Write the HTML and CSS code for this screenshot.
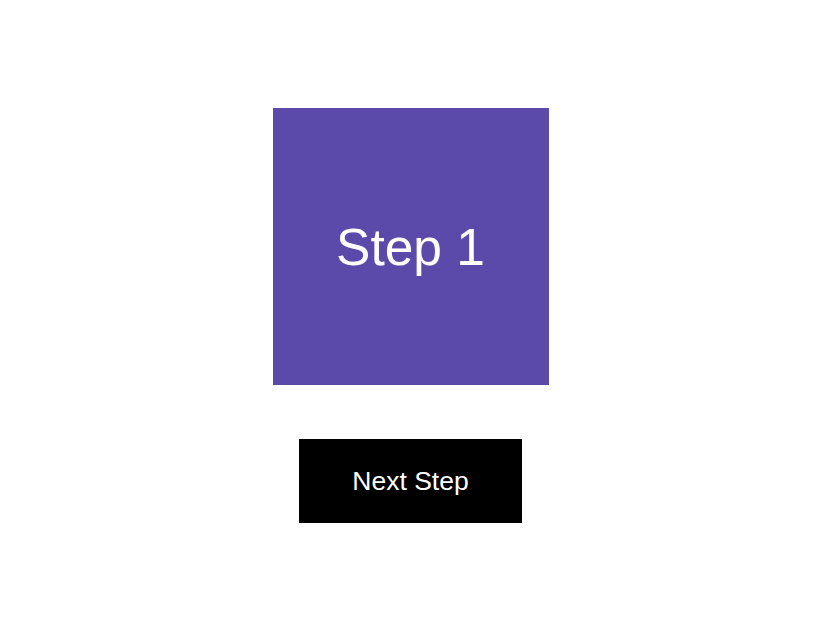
FILE: index.html
```html
<!DOCTYPE html>
<html>
<head>
<meta charset="utf-8">
<link rel="stylesheet" href="styles.css">
</head>
<body>
<div class="stage">
  <div class="step-box">Step 1</div>
  <button class="next-btn">Next Step</button>
</div>
</body>
</html>
```
FILE: styles.css
```css
html, body {
  margin: 0;
  padding: 0;
  background: #ffffff;
}
.stage {
  width: 821px;
  padding-top: 108px;
  display: flex;
  flex-direction: column;
  align-items: center;
  gap: 54px;
  font-family: "Liberation Sans", Arial, sans-serif;
}
.step-box {
  width: 276px;
  height: 277px;
  background: #5c4aab;
  color: #ffffff;
  font-size: 51.5px;
  display: flex;
  align-items: center;
  justify-content: center;
}
.next-btn {
  width: 223px;
  height: 84px;
  background: #000000;
  color: #ffffff;
  border: none;
  font-family: "Liberation Sans", Arial, sans-serif;
  font-size: 26.5px;
  padding: 0;
}
```
